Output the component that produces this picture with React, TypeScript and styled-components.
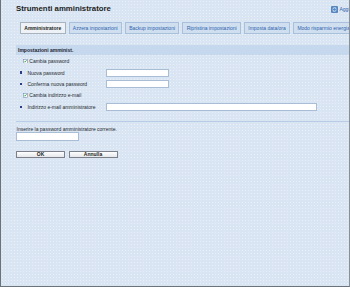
import React from "react";
import styled, { createGlobalStyle } from "styled-components";

const GlobalStyle = createGlobalStyle`
    html, body {
        margin: 0;
        padding: 0;
        background: #dae6f2;
    }
    * {
        box-sizing: border-box;
    }
`;

const Page = styled.div`
    width: 350px;
    height: 287px;
    overflow: hidden;
    font-family: "Liberation Sans", Arial, sans-serif;
    font-size: 5px;
    color: #262a30;
    background-color: #d9e5f2;
    background-image: radial-gradient(rgba(255, 255, 255, 0.4) 0.6px, transparent 0.8px);
    background-size: 3px 3px;
    border-left: 1px solid #6c727a;
    border-right: 1px solid #8a9098;
    border-bottom: 1px solid #6c727a;
`;

const Inner = styled.div`
    width: 420px;
    padding-left: 15px;
`;

const TopBar = styled.div`
    display: grid;
    grid-template-columns: 315px auto;
    align-items: center;
    height: 22px;
    padding-bottom: 4px;
`;

const Title = styled.h1`
    margin: 0;
    font-size: 7.8px;
    font-weight: bold;
    color: #1c1e22;
    line-height: 12px;
`;

const UpdateLink = styled.a`
    display: flex;
    align-items: center;
    gap: 1.5px;
    color: #2f5fae;
    white-space: nowrap;
`;

const Tabs = styled.div`
    display: flex;
    gap: 3px;
    padding-left: 4px;
    height: 11.5px;
    margin-bottom: 11.5px;
`;

const Tab = styled.div<{ $active?: boolean }>`
    flex-shrink: 0;
    display: flex;
    align-items: center;
    padding: 0 3.3px;
    white-space: nowrap;
    border: 1px solid ${p => (p.$active ? "#a8b3c0" : "#a9c0dc")};
    background: ${p => (p.$active ? "#eef2f7" : "#d0dff0")};
    color: ${p => (p.$active ? "#1a1c20" : "#2f5fae")};
    font-weight: ${p => (p.$active ? "bold" : "normal")};
`;

const SectionHeader = styled.div`
    height: 10px;
    display: flex;
    align-items: center;
    padding-left: 2px;
    background: #c5d8ed;
    font-weight: bold;
    color: #1e2430;
`;

const Rows = styled.div`
    padding-top: 0.5px;
`;

const Row = styled.div<{ $indent: number }>`
    display: flex;
    align-items: center;
    height: 11.4px;
    padding-left: ${p => p.$indent}px;
`;

const Label = styled.div<{ $width?: number }>`
    display: flex;
    align-items: center;
    gap: ${p => (p.$width ? 5.5 : 1.8)}px;
    width: ${p => (p.$width ? `${p.$width}px` : "auto")};
    white-space: nowrap;
`;

const Bullet = styled.span`
    width: 2.4px;
    height: 2.4px;
    background: #2b3d8a;
`;

const CheckMark = styled.svg`
    display: block;
    flex-shrink: 0;
`;

const TextInput = styled.div<{ $width: number }>`
    width: ${p => p.$width}px;
    height: 8px;
    background: #fff;
    border: 1px solid #a9bdd6;
`;

const Divider = styled.div`
    height: 1px;
    background: #b8cce6;
    margin-top: 9px;
`;

const Prompt = styled.div`
    margin-top: 4px;
    line-height: 6px;
    padding-left: 0.5px;
`;

const PromptInput = styled.div`
    width: 63px;
    height: 9px;
    background: #fff;
    border: 1px solid #a9bdd6;
`;

const Buttons = styled.div`
    display: flex;
    gap: 3.5px;
    margin-top: 9.5px;
`;

const Button = styled.button`
    width: 49px;
    height: 7.5px;
    padding: 0;
    font-family: inherit;
    font-size: 5px;
    font-weight: bold;
    line-height: 5px;
    color: #1e1f22;
    background: linear-gradient(#ffffff, #e4e6ea);
    border: 0.6px solid #7c8088;
    border-radius: 0.5px;
`;

const Check = () => (
    <CheckMark width="4.5" height="4.5" viewBox="0 0 9 9">
        <rect x="0.5" y="0.5" width="8" height="8" fill="#fff" stroke="#5f7ea6" />
        <path d="M2 4.6 L3.8 6.5 L7.2 2.4" fill="none" stroke="#249a34" strokeWidth="1.5" />
    </CheckMark>
);

const RefreshIcon = () => (
    <svg width="7" height="7" viewBox="0 0 14 14">
        <rect x="0.5" y="0.5" width="13" height="13" rx="2.5" fill="#4f86c6" stroke="#2d5c98" />
        <path d="M3.5 7 A3.5 3.5 0 0 1 9.8 4.8" fill="none" stroke="#fff" strokeWidth="1.4" />
        <path d="M10.5 7 A3.5 3.5 0 0 1 4.2 9.2" fill="none" stroke="#fff" strokeWidth="1.4" />
        <path d="M8.2 3.6 L10.6 3.4 L10.4 6 Z" fill="#fff" />
        <path d="M5.8 10.4 L3.4 10.6 L3.6 8 Z" fill="#fff" />
    </svg>
);

const tabs = [
    "Amministratore",
    "Azzera impostazioni",
    "Backup impostazioni",
    "Ripristina impostazioni",
    "Imposta data/ora",
    "Modo risparmio energia",
];

const App: React.FC = () => {
    return (
        <>
            <GlobalStyle />
            <Page>
                <Inner>
                    <TopBar>
                        <Title>Strumenti amministratore</Title>
                        <UpdateLink>
                            <RefreshIcon />
                            Aggiorna
                        </UpdateLink>
                    </TopBar>
                    <Tabs>
                        {tabs.map((t, i) => (
                            <Tab key={t} $active={i === 0}>{t}</Tab>
                        ))}
                    </Tabs>
                    <SectionHeader>Impostazioni amminist.</SectionHeader>
                    <Rows>
                        <Row $indent={7}>
                            <Label><Check />Cambia password</Label>
                        </Row>
                        <Row $indent={3.5}>
                            <Label $width={86.5}><Bullet />Nuova password</Label>
                            <TextInput $width={63} />
                        </Row>
                        <Row $indent={3.5}>
                            <Label $width={86.5}><Bullet />Conferma nuova password</Label>
                            <TextInput $width={63} />
                        </Row>
                        <Row $indent={7}>
                            <Label><Check />Cambia indirizzo e-mail</Label>
                        </Row>
                        <Row $indent={3.5}>
                            <Label $width={86.5}><Bullet />Indirizzo e-mail amministratore</Label>
                            <TextInput $width={211} />
                        </Row>
                    </Rows>
                    <Divider />
                    <Prompt>Inserire la password amministratore corrente.</Prompt>
                    <PromptInput />
                    <Buttons>
                        <Button>OK</Button>
                        <Button>Annulla</Button>
                    </Buttons>
                </Inner>
            </Page>
        </>
    );
};

export default App;
